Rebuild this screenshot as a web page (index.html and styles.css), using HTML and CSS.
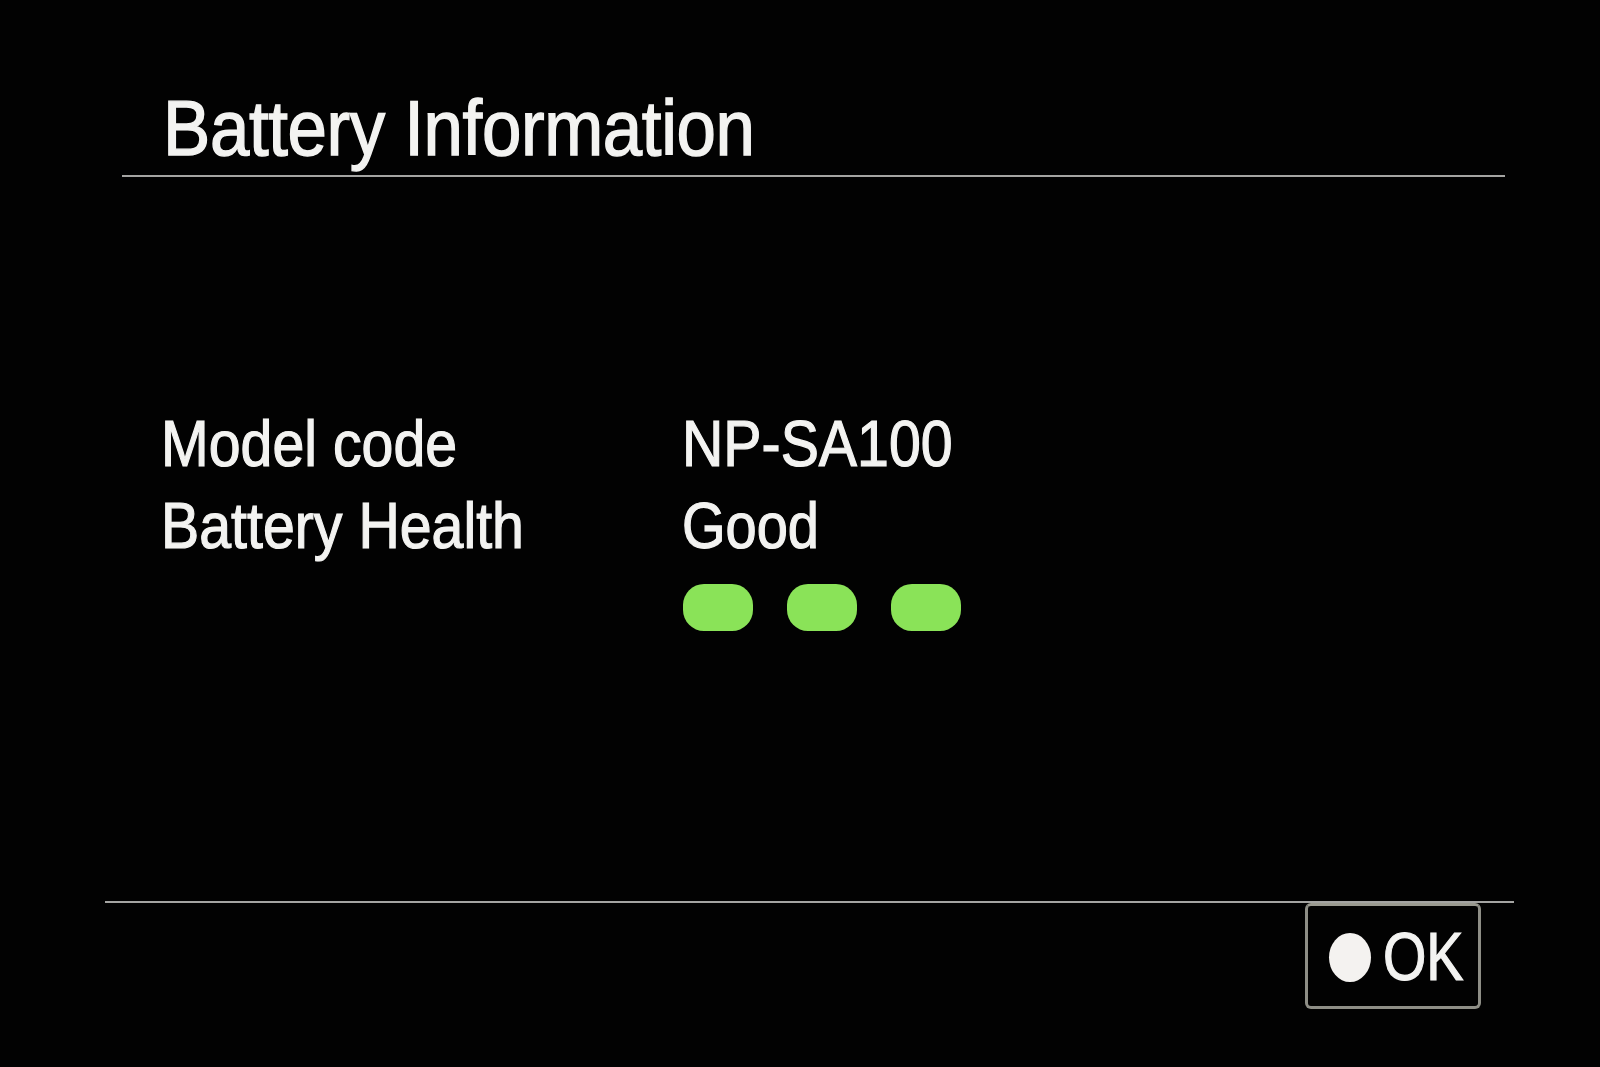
FILE: index.html
```html
<!DOCTYPE html>
<html lang="en">
<head>
<meta charset="utf-8">
<title>Battery Information</title>
<link rel="stylesheet" href="styles.css">
</head>
<body>
<div class="screen">
  <header class="header">
    <h1 class="title">Battery Information</h1>
  </header>
  <section class="info">
    <div class="label">Model code</div>
    <div class="value">NP-SA100</div>
    <div class="label">Battery Health</div>
    <div class="value">Good</div>
    <div class="health">
      <span class="pill"></span>
      <span class="pill"></span>
      <span class="pill"></span>
    </div>
  </section>
  <footer class="footer">
    <div class="ok-button">
      <span class="dot"></span>
      <span class="ok-text">OK</span>
    </div>
  </footer>
</div>
</body>
</html>
```
FILE: styles.css
```css
html, body {
  margin: 0;
  padding: 0;
  background: #020202;
}

body {
  font-family: "Liberation Sans", Arial, sans-serif;
  color: #f3f3f1;
}

.screen {
  width: 1600px;
  height: 1067px;
  display: flex;
  flex-direction: column;
  overflow: hidden;
}

.header {
  margin-left: 122px;
  width: 1383px;
  padding-top: 89px;
  padding-bottom: 8px;
  border-bottom: 2px solid #a4a4a2;
}

.title {
  display: inline-block;
  margin: 0 0 0 41px;
  font-size: 78px;
  line-height: 78px;
  font-weight: normal;
  letter-spacing: -0.005em;
  -webkit-text-stroke: 1.4px #f3f3f1;
  transform: scaleX(0.908);
  transform-origin: left center;
}

.info {
  margin-top: 226px;
  padding-left: 161px;
  display: grid;
  grid-template-columns: 521px auto;
  grid-template-rows: 82px 82px auto;
  font-size: 64px;
  line-height: 82px;
}

.label,
.value {
  -webkit-text-stroke: 1.2px #f3f3f1;
  transform: scaleX(0.895);
  transform-origin: left center;
  white-space: nowrap;
}

.value:nth-of-type(4) {
  transform: scaleX(0.875);
}

.health {
  grid-row: 3;
  grid-column: 2;
  margin-top: 17px;
  margin-left: 1px;
  display: flex;
  gap: 34px;
  height: 47px;
}

.pill {
  width: 70px;
  height: 47px;
  border-radius: 21px;
  background: #8ae358;
}

.footer {
  margin-top: 270px;
  margin-left: 105px;
  width: 1409px;
  border-top: 2px solid #a4a4a2;
  display: flex;
  justify-content: flex-end;
}

.ok-button {
  margin-right: 33px;
  box-sizing: border-box;
  width: 176px;
  height: 106px;
  border: 3px solid #8e8e86;
  border-top-color: #9a9a90;
  border-radius: 6px;
  display: flex;
  align-items: center;
  padding-left: 21px;
  overflow: hidden;
}

.dot {
  flex-shrink: 0;
  width: 42px;
  height: 49px;
  border-radius: 50%;
  background: #f4f2f0;
  margin-top: 2px;
}

.ok-text {
  flex-shrink: 0;
  display: inline-block;
  margin-left: 12px;
  font-size: 68px;
  line-height: 68px;
  -webkit-text-stroke: 1.2px #f3f3f1;
  transform: scaleX(0.82);
  transform-origin: left center;
}
```
